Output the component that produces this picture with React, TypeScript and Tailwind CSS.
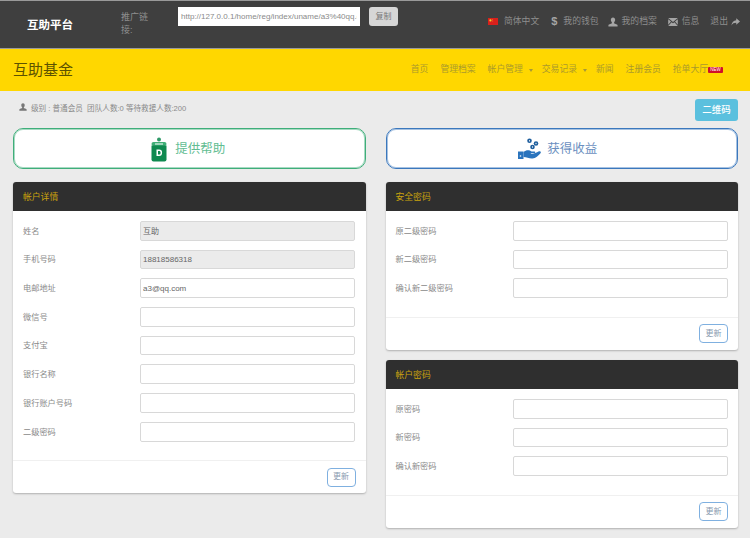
import type { ReactNode } from "react";

const FONT = "[font-family:'Liberation_Sans','Noto_Sans_CJK_SC',sans-serif]";

function UserIcon({ className }: { className: string }) {
  return (
    <svg viewBox="0 0 12 12" className={className} fill="currentColor">
      <path d="M6 0.5c1.7 0 2.6 1.2 2.6 2.9 0 1.3-.6 2.5-1.3 3.1v1c0 .6 3.9 1 4.2 2.3V11.5H.5V9.800c.3-1.300 4.200-1.700 4.200-2.300v-1C4 5.900 3.400 4.700 3.400 3.400 3.400 1.700 4.300.5 6 .5z" />
    </svg>
  );
}

function MailIcon() {
  return (
    <svg viewBox="0 0 12 10" className="w-[10px] h-[8px] text-[#a5a5a5]" fill="currentColor">
      <path d="M0 0h12L6 5z" />
      <path d="M0 1.500l3.500 3L0 8.500zM12 1.500l-3.500 3 3.500 4zM4.200 5.200 6 6.700l1.800-1.500L12 10H0z" />
    </svg>
  );
}

function ArrowIcon() {
  return (
    <svg viewBox="0 0 12 10" className="w-[9px] h-[8px] text-[#a5a5a5]" fill="currentColor">
      <path d="M7 0l5 4.200L7 8.500V6C4 6 2 7 .5 9.500 1 5.500 3.500 2.700 7 2.500z" />
    </svg>
  );
}

function Flag() {
  return (
    <svg viewBox="0 0 10 7" className="w-[10px] h-[7px]">
      <rect width="10" height="7" fill="#d8201c" />
      <circle cx="2.400" cy="2.400" r="1.100" fill="#f4d22a" />
      <circle cx="4.500" cy="1.300" r="0.400" fill="#f4d22a" />
      <circle cx="4.800" cy="3" r="0.400" fill="#f4d22a" />
    </svg>
  );
}

function JarIcon() {
  return (
    <svg viewBox="0 0 16 25" className="w-[16px] h-[25px]">
      <circle cx="8" cy="2.500" r="2" fill="#2f9a68" />
      <rect x="0.500" y="5" width="15" height="4" rx="2" fill="#3fae76" />
      <rect x="4" y="6.500" width="8" height="1" fill="#ffffff" />
      <path d="M.5 8.500h15v14a2 2 0 0 1-2 2h-11a2 2 0 0 1-2-2z" fill="#0f8a50" />
      <path d="M5.500 12.500h2.600c2 0 3 1.200 3 3.200s-1 3.300-3 3.300H5.500zM7 13.900v3.700h1c1 0 1.600-.6 1.600-1.900s-.6-1.800-1.600-1.800z" fill="#ffffff" />
    </svg>
  );
}

function CoinsIcon() {
  return (
    <svg viewBox="0 0 24 22" className="w-[24px] h-[22px]">
      <circle cx="11.500" cy="2.800" r="2.300" fill="#1f5f9e" />
      <circle cx="18" cy="5.500" r="2.300" fill="#1f5f9e" />
      <circle cx="14.500" cy="9" r="2.300" fill="#1f5f9e" />
      <rect x="11" y="2.200" width="1" height="1.200" fill="#ffffff" />
      <rect x="17.500" y="4.900" width="1" height="1.200" fill="#ffffff" />
      <rect x="14" y="8.400" width="1" height="1.200" fill="#ffffff" />
      <path d="M0 13.500h5.500V21H0z" fill="#2a74bd" />
      <path d="M5.500 14c3-2.500 6-2 8-.5h3c1 0 1 1.500 0 1.800h-4l1 .7c2 .5 5-1.500 7-2.500 2-.6 3 .6 2 1.700-2 2.500-5 5-8 5.300-3 .3-6-1.500-9-1.500z" fill="#2a74bd" />
      <circle cx="2.500" cy="18" r="0.800" fill="#ffffff" />
    </svg>
  );
}

function Caret() {
  return <span className="ml-[6px] -mr-[3px] w-0 h-0 border-x-[2.500px] border-x-transparent border-t-[3px] border-t-[#a89a35]" />;
}

function NavLink({ children }: { children: ReactNode }) {
  return <span className="flex items-center whitespace-nowrap">{children}</span>;
}

function Field({ label, value, disabled }: { label: string; value?: string; disabled?: boolean }) {
  return (
    <div className="flex items-center h-[19.700px]">
      <label className="w-[117px] shrink-0 pt-[2px] text-[8.200px] text-[#8a8a8a]">{label}</label>
      <input
        readOnly
        value={value ?? ""}
        className={`w-[215px] h-full rounded-[2px] border border-[#d8d8d8] px-[2px] text-[8px] text-[#666666] outline-0 ${disabled ? "bg-[#ebebeb]" : "bg-white"}`}
      />
    </div>
  );
}

function Panel({ title, fields }: { title: string; fields: { label: string; value?: string; disabled?: boolean }[] }) {
  return (
    <div className="bg-white rounded-[3px] shadow-[0_1px_2px_rgba(0,0,0,0.25)] overflow-hidden">
      <div className="h-[29px] bg-[#2f2f2f] px-[10px] pt-[2px] flex items-center text-[8.800px] text-[#c9a20d]">{title}</div>
      <div className="pt-[10px] pb-[18.500px] pl-[10px] flex flex-col gap-[9px]">
        {fields.map((f) => (
          <Field key={f.label} {...f} />
        ))}
      </div>
      <div className="h-[33px] border-t border-[#f0f0f0] pr-[10px] flex items-center justify-end">
        <button className="w-[29px] h-[19px] rounded-[4px] border border-[#7fb0e0] text-[8px] text-[#8a9bb0]">更新</button>
      </div>
    </div>
  );
}

export default function App() {
  return (
    <div className={`w-[750px] h-[538px] overflow-hidden bg-[#ebebeb] ${FONT}`}>
      <div className="h-[49px] bg-[#3f3f3f] border-y border-[#9a9a9a] flex items-start">
        <div className="w-[121px] pl-[27px] pt-[16px] text-[11.500px] font-bold text-white">互助平台</div>
        <div className="w-[57px] pt-[10px] pr-[22px] text-[9px] leading-[13px] text-[#8e8e8e]">推广链接:</div>
        <input
          readOnly
          value="http://127.0.0.1/home/reg/index/uname/a3%40qq.com"
          className="mt-[6px] w-[182px] h-[19px] bg-white px-[3px] text-[8px] text-[#8a8a8a] outline-0"
        />
        <button className="ml-[9px] mt-[6px] w-[29px] h-[19px] rounded-[3px] bg-[#d6d6d6] text-[8px] text-[#777777]">复制</button>
        <div className="ml-[90px] mt-[14px] flex items-center text-[8.800px] text-[#8e8e8e]">
          <Flag />
          <span className="ml-[6px]">简体中文</span>
          <span className="ml-[12px] text-[11px] font-bold text-[#a5a5a5] leading-none">$</span>
          <span className="ml-[6px]">我的钱包</span>
          <UserIcon className="ml-[9px] w-[10px] h-[10px] text-[#a5a5a5]" />
          <span className="ml-[4px]">我的档案</span>
          <span className="ml-[11px]"><MailIcon /></span>
          <span className="ml-[4px]">信息</span>
          <span className="ml-[11px]">退出</span>
          <span className="ml-[3px]"><ArrowIcon /></span>
        </div>
      </div>

      <div className="h-[42px] bg-[#ffd700] flex items-center pl-[13px] pr-[27px]">
        <div className="pt-[1px] text-[15px] text-[#5c5200]">互助基金</div>
        <div className="ml-auto flex items-center gap-[12px] text-[8.800px] text-[#ab9a2c]">
          <NavLink>首页</NavLink>
          <NavLink>管理档案</NavLink>
          <NavLink>帐户管理<Caret /></NavLink>
          <NavLink>交易记录<Caret /></NavLink>
          <NavLink>新闻</NavLink>
          <NavLink>注册会员</NavLink>
          <NavLink>
            抢单大厅
            <span className="w-[15px] h-[6px] bg-[#d0102a] rounded-[1px] text-[4.500px] leading-[6px] text-center text-white -mt-[1px]">NEW</span>
          </NavLink>
        </div>
      </div>

      <div className="h-[37px] pl-[19px] pr-[12px] flex items-start">
        <UserIcon className="mt-[12px] w-[8px] h-[8px] text-[#777777]" />
        <div className="ml-[4px] mt-[12px] text-[7.600px] text-[#8a8a8a] whitespace-pre">级别 : 普通会员  团队人数:0 等待救援人数:200</div>
        <button className="ml-auto mt-[8px] w-[43px] h-[22px] rounded-[3px] bg-[#5bc0de] text-[9.500px] font-medium text-white">二维码</button>
      </div>

      <div className="grid grid-cols-2 gap-x-[20px] pl-[13px] pr-[12px] items-start">
        <div className="flex flex-col gap-[13px]">
          <button className="h-[41px] pr-[2px] pt-[1px] rounded-[10px] border border-[#3fae7a] shadow-[inset_0_0_0_1px_rgba(63,174,122,0.45)] bg-white flex items-center justify-center gap-[8px] text-[12.500px] text-[#62bd92]">
            <JarIcon />
            提供帮助
          </button>
          <Panel
            title="帐户详情"
            fields={[
              { label: "姓名", value: "互助", disabled: true },
              { label: "手机号码", value: "18818586318", disabled: true },
              { label: "电邮地址", value: "a3@qq.com" },
              { label: "微信号" },
              { label: "支付宝" },
              { label: "银行名称" },
              { label: "银行账户号码" },
              { label: "二级密码" },
            ]}
          />
        </div>
        <div className="flex flex-col gap-[13px]">
          <button className="h-[41px] pr-[8px] pt-[1px] rounded-[10px] border border-[#3b78bd] shadow-[inset_0_0_0_1px_rgba(59,120,189,0.45)] bg-white flex items-center justify-center gap-[5px] text-[12.500px] text-[#6b8fc0]">
            <CoinsIcon />
            获得收益
          </button>
          <div className="flex flex-col gap-[10.400px]">
            <Panel
              title="安全密码"
              fields={[{ label: "原二级密码" }, { label: "新二级密码" }, { label: "确认新二级密码" }]}
            />
            <Panel title="帐户密码" fields={[{ label: "原密码" }, { label: "新密码" }, { label: "确认新密码" }]} />
          </div>
        </div>
      </div>
    </div>
  );
}
